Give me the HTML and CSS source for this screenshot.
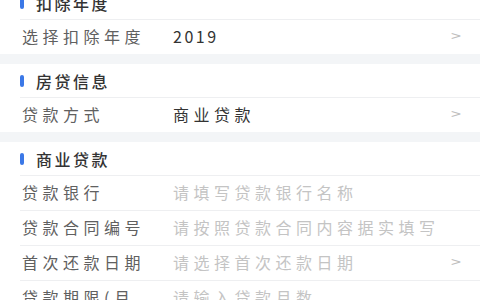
FILE: index.html
```html
<!DOCTYPE html>
<html lang="zh-CN">
<head>
    <meta charset="UTF-8">
    <meta name="viewport" content="width=device-width, initial-scale=1.0">
    <title>房贷利息扣除</title>
    <link rel="stylesheet" href="styles.css">
</head>
<body>
    <div class="page">
        <!-- 扣除年度 -->
        <section class="group group-first">
            <div class="group-title"><span class="mark"></span>扣除年度</div>
            <div class="row">
                <span class="label">选择扣除年度</span>
                <span class="value num">2019</span>
                <span class="arrow">&gt;</span>
            </div>
        </section>

        <!-- 房贷信息 -->
        <section class="group">
            <div class="group-title"><span class="mark"></span>房贷信息</div>
            <div class="row">
                <span class="label">贷款方式</span>
                <span class="value">商业贷款</span>
                <span class="arrow">&gt;</span>
            </div>
        </section>

        <!-- 商业贷款 -->
        <section class="group">
            <div class="group-title"><span class="mark"></span>商业贷款</div>
            <div class="row">
                <span class="label">贷款银行</span>
                <span class="value placeholder">请填写贷款银行名称</span>
            </div>
            <div class="row">
                <span class="label">贷款合同编号</span>
                <span class="value placeholder">请按照贷款合同内容据实填写</span>
            </div>
            <div class="row">
                <span class="label">首次还款日期</span>
                <span class="value placeholder">请选择首次还款日期</span>
                <span class="arrow">&gt;</span>
            </div>
            <div class="row">
                <span class="label">贷款期限(月</span>
                <span class="value placeholder">请输入贷款月数</span>
            </div>
        </section>
    </div>
</body>
</html>
```

FILE: styles.css
```css
* {
    box-sizing: border-box;
}

body {
    margin: 0;
    background-color: #f3f5f7;
    font-family: "Noto Sans CJK SC", "Noto Sans", sans-serif;
    overflow: hidden;
}

.page {
    width: 480px;
}

.group {
    background-color: #fff;
    margin-bottom: 10px;
}

.group-first {
    margin-top: -14px;
}

.group-title {
    display: flex;
    align-items: center;
    height: 33px;
    padding-left: 20px;
    font-size: 16px;
    font-weight: 500;
    letter-spacing: 2.5px;
    color: #333;
}

.mark {
    width: 4px;
    height: 12px;
    margin-right: 12px;
    border-radius: 2px;
    background-color: #3b78e7;
}

.row {
    display: flex;
    align-items: center;
    height: 35px;
    margin-left: 20px;
    padding-left: 2px;
    padding-right: 19px;
    padding-bottom: 3px;
    border-top: 1px solid #eeeff1;
    font-size: 16px;
    letter-spacing: 4.5px;
}

.label {
    width: 151px;
    flex-shrink: 0;
    color: #606060;
    white-space: nowrap;
}

.value {
    flex: 1;
    color: #333;
    white-space: nowrap;
}

.num {
    letter-spacing: 2.5px;
}

.placeholder {
    color: #c4c4c4;
}

.arrow {
    font-size: 18px;
    letter-spacing: 0;
    color: #bdbdbd;
    transform: scaleY(0.75) translateY(-2px);
}
```
